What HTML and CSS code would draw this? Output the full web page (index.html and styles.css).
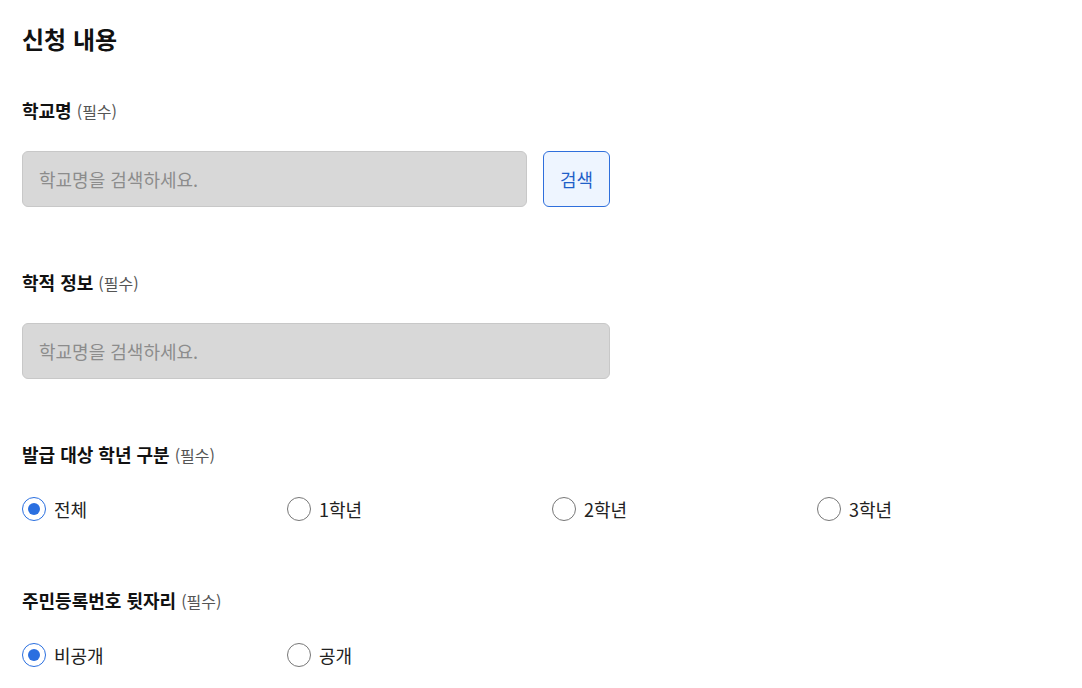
FILE: index.html
```html
<!DOCTYPE html>
<html lang="ko">
<head>
    <meta charset="UTF-8">
    <meta name="viewport" content="width=device-width, initial-scale=1.0">
    <title>신청 내용</title>
    <link rel="stylesheet" href="styles.css">
</head>
<body>

<div class="container">
    <h2 class="title">신청 내용</h2>

    <div class="field">
        <label class="field-label" for="school">학교명 <span class="req">(필수)</span></label>
        <div class="search-row">
            <input type="text" id="school" class="text-input" placeholder="학교명을 검색하세요." readonly>
            <button type="button" class="search-btn">검색</button>
        </div>
    </div>

    <div class="field">
        <label class="field-label" for="record">학적 정보 <span class="req">(필수)</span></label>
        <input type="text" id="record" class="text-input wide" placeholder="학교명을 검색하세요." readonly>
    </div>

    <div class="field">
        <div class="field-label">발급 대상 학년 구분 <span class="req">(필수)</span></div>
        <div class="radio-group">
            <label class="radio"><input type="radio" name="grade" checked> 전체</label>
            <label class="radio"><input type="radio" name="grade"> 1학년</label>
            <label class="radio"><input type="radio" name="grade"> 2학년</label>
            <label class="radio"><input type="radio" name="grade"> 3학년</label>
        </div>
    </div>

    <div class="field">
        <div class="field-label">주민등록번호 뒷자리 <span class="req">(필수)</span></div>
        <div class="radio-group">
            <label class="radio"><input type="radio" name="rrn" checked> 비공개</label>
            <label class="radio"><input type="radio" name="rrn"> 공개</label>
        </div>
    </div>
</div>

</body>
</html>
```

FILE: styles.css
```css
body {
    font-family: "Noto Sans CJK KR", "Noto Sans", sans-serif;
    margin: 0;
    background-color: white;
    color: #111;
}

.container {
    padding: 23px 0 0 22px;
}

.title {
    font-size: 24px;
    line-height: 32px;
    font-weight: 700;
    margin: 0 0 43px 0;
}

.field {
    margin-bottom: 63px;
}

.field-label {
    display: block;
    font-size: 18px;
    line-height: 24px;
    font-weight: 700;
    margin-bottom: 28px;
}

.req {
    font-size: 16px;
    font-weight: 400;
    color: #555;
}

.search-row {
    display: flex;
    gap: 16px;
}

.text-input {
    width: 505px;
    height: 56px;
    padding: 0 16px;
    border: 1px solid #c8c8c8;
    border-radius: 6px;
    background-color: #d8d8d8;
    font-family: inherit;
    font-size: 18px;
    color: #333;
    box-sizing: border-box;
    outline: none;
}

.text-input::placeholder {
    color: #8c8c8c;
}

.text-input.wide {
    width: 588px;
}

.search-btn {
    width: 67px;
    height: 56px;
    border: 1px solid #2f6fdc;
    border-radius: 6px;
    background-color: #eef5ff;
    color: #1f5fc8;
    font-family: inherit;
    font-size: 18px;
    cursor: pointer;
}

.radio-group {
    display: grid;
    grid-template-columns: repeat(4, 265px);
    padding: 2px 0 4px;
}

.radio {
    display: flex;
    align-items: center;
    gap: 8px;
    font-size: 18px;
    line-height: 24px;
    color: #222;
}

.radio input {
    appearance: none;
    -webkit-appearance: none;
    margin: 0;
    width: 24px;
    height: 24px;
    border: 1.5px solid #777;
    border-radius: 50%;
    box-sizing: border-box;
    display: grid;
    place-items: center;
    background: white;
}

.radio input:checked {
    border-color: #2a6fe0;
}

.radio input:checked::after {
    content: "";
    width: 12px;
    height: 12px;
    border-radius: 50%;
    background-color: #2a6fe0;
}
```
